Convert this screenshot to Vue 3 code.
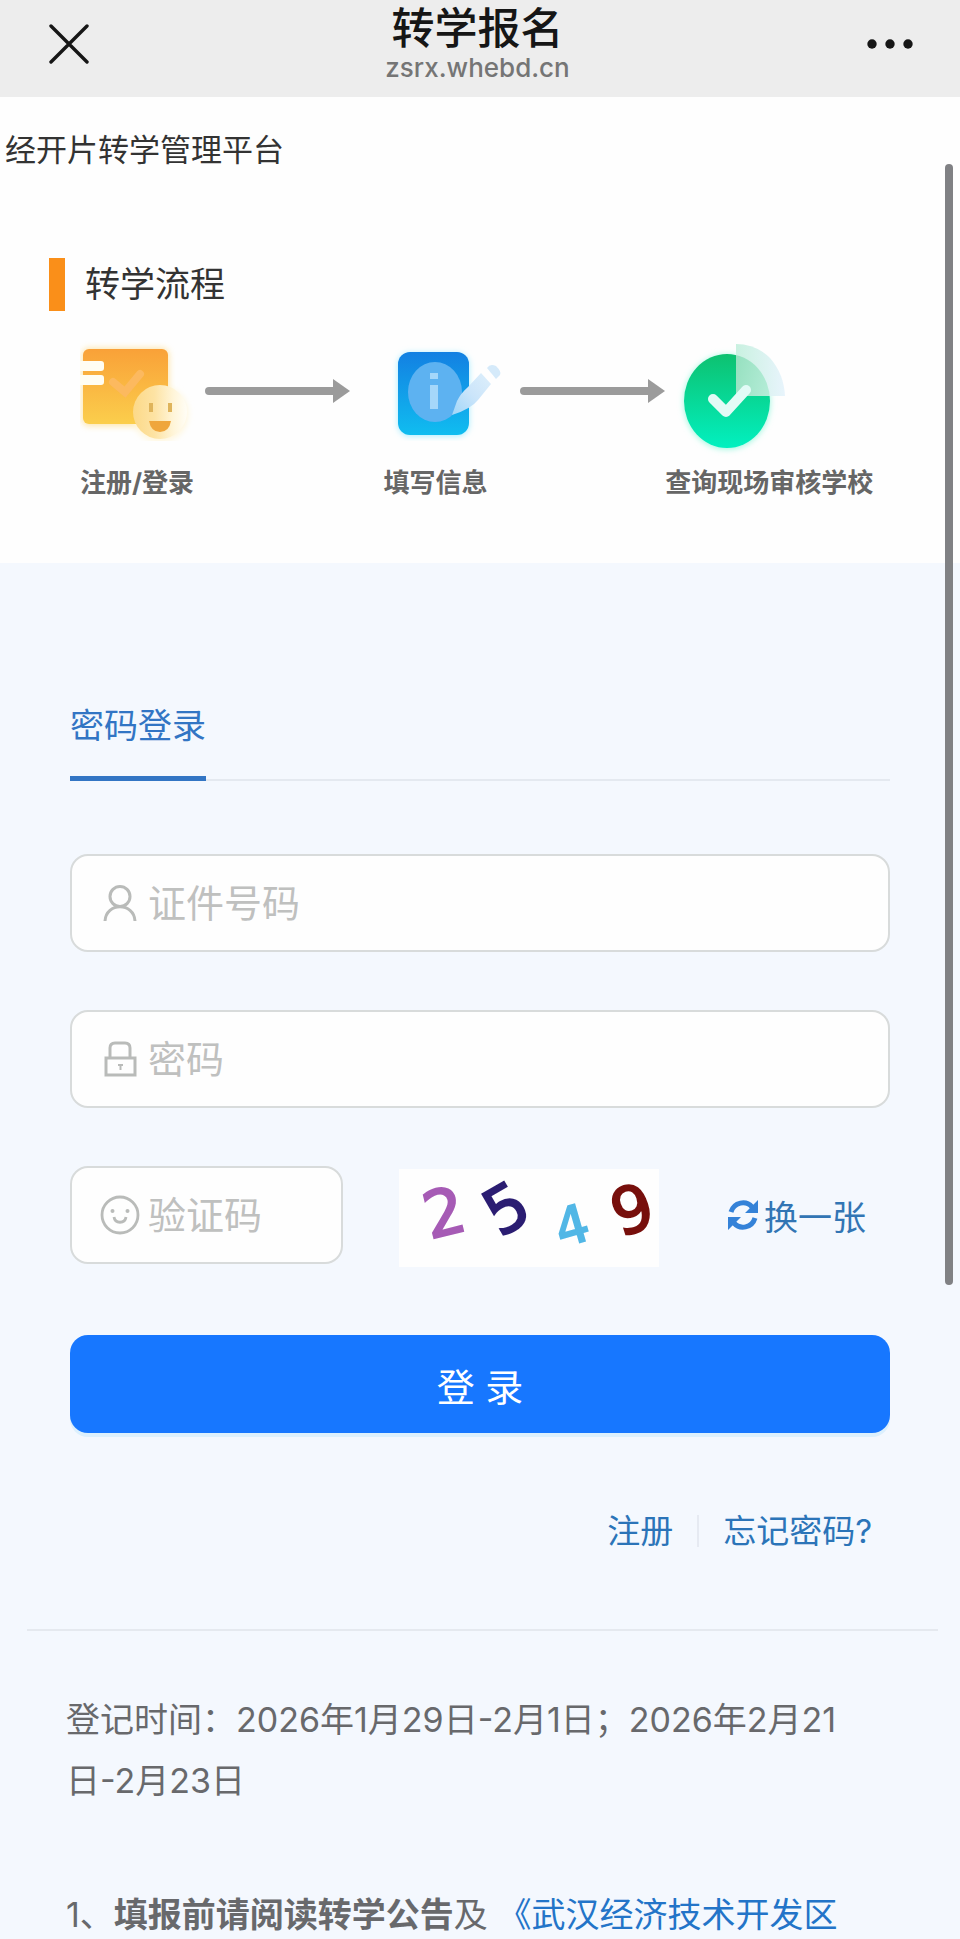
<script setup>
import { ref } from 'vue'

const idNumber = ref('')
const password = ref('')
const code = ref('')
</script>

<template>
  <div class="page">
    <header class="bar">
      <button class="bar-btn" type="button" aria-label="关闭">
        <svg width="40" height="40" viewBox="0 0 40 40">
          <path d="M2 2L38 38M38 2L2 38" fill="none" stroke="#161616" stroke-width="3.4" stroke-linecap="round" />
        </svg>
      </button>
      <div class="bar-title">
        <h1>转学报名</h1>
        <span>zsrx.whebd.cn</span>
      </div>
      <button class="bar-btn" type="button" aria-label="更多">
        <svg width="48" height="12" viewBox="0 0 48 12" fill="#161616">
          <circle cx="6" cy="6" r="4.7" />
          <circle cx="24" cy="6" r="4.7" />
          <circle cx="42" cy="6" r="4.7" />
        </svg>
      </button>
    </header>

    <section class="intro">
      <p class="platform">经开片转学管理平台</p>
      <h2 class="heading">转学流程</h2>
      <div class="steps">
        <div class="step">
          <svg width="124" height="100" viewBox="0 0 124 100">
            <defs>
              <linearGradient id="amber" x1="0" y1="0" x2="0" y2="1">
                <stop offset="0" stop-color="#f9a138" />
                <stop offset="1" stop-color="#fbce4c" />
              </linearGradient>
              <linearGradient id="cream" x1="0" y1="0" x2="1" y2="0">
                <stop offset="0" stop-color="#fcd988" />
                <stop offset="0.4" stop-color="#fde3a4" />
                <stop offset="0.75" stop-color="#fff5d9" />
                <stop offset="1" stop-color="#fffdf6" />
              </linearGradient>
              <filter id="soft" x="-20%" y="-20%" width="140%" height="140%">
                <feGaussianBlur stdDeviation="3" />
              </filter>
            </defs>
            <rect x="2" y="7" width="87" height="78" rx="7" fill="#fdda86" opacity="0.7" filter="url(#soft)" />
            <circle cx="80" cy="73" r="28" fill="#fff6da" filter="url(#soft)" />
            <rect x="3" y="8" width="85" height="75" rx="6" fill="url(#amber)" />
            <path d="M0 20H21a3 3 0 0 1 3 3v4a3 3 0 0 1-3 3H0zM0 34H21a3 3 0 0 1 3 3v4a3 3 0 0 1-3 3H0z" fill="#fffdf3" />
            <path d="M33 41L45 51L60 33" fill="none" stroke="#fcb95f" stroke-width="8" stroke-linecap="round" />
            <circle cx="80" cy="71" r="27" fill="url(#cream)" />
            <path d="M71 62v9M90 62v9" stroke="#dfb45b" stroke-width="4" />
            <path d="M69 80H91Q89 91 80 91Q71 91 69 80Z" fill="#efa63c" />
          </svg>
          <span>注册/登录</span>
        </div>
        <svg class="arrow" width="146" height="100" viewBox="0 0 146 100">
          <path d="M5 50H132" stroke="#9b9b9b" stroke-width="8" stroke-linecap="round" />
          <path d="M129 38L146 50L129 62Z" fill="#9b9b9b" />
        </svg>
        <div class="step">
          <svg width="124" height="100" viewBox="0 0 124 100">
            <defs>
              <linearGradient id="azure" x1="0" y1="0" x2="0" y2="1">
                <stop offset="0" stop-color="#1380e2" />
                <stop offset="1" stop-color="#10bdf0" />
              </linearGradient>
              <linearGradient id="pen" x1="0" y1="1" x2="1" y2="0">
                <stop offset="0" stop-color="#9fd6f9" />
                <stop offset="0.5" stop-color="#cbe5fa" />
                <stop offset="1" stop-color="#deeffb" />
              </linearGradient>
            </defs>
            <rect x="14" y="12" width="71" height="83" rx="12" fill="#a5ecff" filter="url(#soft)" />
            <rect x="14" y="11" width="71" height="83" rx="12" fill="url(#azure)" />
            <ellipse cx="51" cy="51" rx="27" ry="30" fill="#5db2f1" />
            <path d="M46 32h8v6h-8zM46 44h8v24h-8z" fill="#a5d7fa" />
            <path d="M68 74L73 60Q77 52 84 46L97 32L107 43L94 59Q87 68 68 74Z" fill="url(#pen)" />
            <path d="M103 27Q106 22 112 25Q118 31 116 34L112 38Z" fill="#d5eafa" />
          </svg>
          <span>填写信息</span>
        </div>
        <svg class="arrow" width="146" height="100" viewBox="0 0 146 100">
          <path d="M5 50H132" stroke="#9b9b9b" stroke-width="8" stroke-linecap="round" />
          <path d="M129 38L146 50L129 62Z" fill="#9b9b9b" />
        </svg>
        <div class="step">
          <svg width="124" height="100" viewBox="0 0 124 100" overflow="visible">
            <defs>
              <linearGradient id="jade" x1="0" y1="0" x2="0" y2="1">
                <stop offset="0" stop-color="#0dc170" />
                <stop offset="1" stop-color="#02f0c0" />
              </linearGradient>
              <linearGradient id="mist" x1="0" y1="0" x2="1" y2="0">
                <stop offset="0" stop-color="#c9f1e0" />
                <stop offset="1" stop-color="#e8f4fc" />
              </linearGradient>
              <linearGradient id="mint" x1="0" y1="0" x2="1" y2="0.3">
                <stop offset="0" stop-color="#93dfbd" />
                <stop offset="1" stop-color="#b9eedb" />
              </linearGradient>
              <clipPath id="disc"><ellipse cx="62" cy="60" rx="43" ry="47" /></clipPath>
            </defs>
            <ellipse cx="62" cy="61" rx="43" ry="47" fill="#96f7dc" filter="url(#soft)" />
            <ellipse cx="62" cy="60" rx="43" ry="47" fill="url(#jade)" />
            <path d="M71 55V3Q91 3 105 17Q119 33 120 55Z" fill="url(#mist)" />
            <path d="M71 55V3Q91 3 105 17Q119 33 120 55Z" fill="url(#mint)" clip-path="url(#disc)" />
            <path d="M48 58L61 71L81 49" fill="none" stroke="#e2fbf6" stroke-width="10" stroke-linecap="round" stroke-linejoin="round" />
          </svg>
          <span>查询现场审核学校</span>
        </div>
      </div>
    </section>

    <main>
      <form class="login" @submit.prevent>
        <div class="tabs">
          <button class="tab" type="button">密码登录</button>
        </div>

        <label class="field">
          <svg width="40" height="40" viewBox="0 0 40 40" fill="none" stroke="#b9bbb9" stroke-width="3">
            <circle cx="20" cy="13.500" r="10" />
            <path d="M5 38C6 19 34 19 35 38" />
          </svg>
          <input v-model="idNumber" type="text" placeholder="证件号码" aria-label="证件号码" />
        </label>

        <label class="field">
          <svg width="40" height="40" viewBox="0 0 40 40" fill="none" stroke="#b9bbb9" stroke-width="3">
            <path d="M10 19V9Q10 4 15 4H25Q30 4 30 9V19" />
            <rect x="6" y="19" width="29" height="17" />
            <path d="M18 26h5M20.500 26v5" stroke-width="2" />
          </svg>
          <input v-model="password" type="password" placeholder="密码" aria-label="密码" />
        </label>

        <div class="verify">
          <label class="field">
            <svg width="40" height="40" viewBox="0 0 40 40" fill="none" stroke="#b9bbb9" stroke-width="2.800">
              <circle cx="20" cy="20" r="18" />
              <path d="M14 22C15 29 25 29 26 22" />
              <g fill="#b9bbb9" stroke="none">
                <circle cx="12.500" cy="16" r="2" />
                <circle cx="27.500" cy="16" r="2" />
              </g>
            </svg>
            <input v-model="code" type="text" placeholder="验证码" aria-label="验证码" />
          </label>
          <svg class="captcha" width="260" height="98" viewBox="0 0 260 98" role="img" aria-label="验证码图片">
            <text transform="translate(45 43) rotate(-14)" y="23" fill="#a65bb5" stroke="#a65bb5">2</text>
            <text transform="translate(107 39) rotate(-30)" y="23" fill="#2b1d72" stroke="#2b1d72">5</text>
            <text class="small" transform="translate(173 57) rotate(-16)" y="18" fill="#52b7e6" stroke="#52b7e6">4</text>
            <text transform="translate(233 40) rotate(-18)" y="23" fill="#770f0c" stroke="#770f0c">9</text>
          </svg>
          <button class="refresh" type="button">
            <svg width="32" height="32" viewBox="0 0 32 32">
              <g fill="none" stroke="#3482d8" stroke-width="5">
                <path d="M4 13C7 3 19 1 25 8" />
                <path d="M28 19C25 29 13 31 7 24" />
              </g>
              <path d="M31 1V14H18ZM1 31V18H14Z" fill="#3482d8" />
            </svg>
            换一张
          </button>
        </div>

        <button class="submit" type="submit">登 录</button>

        <nav class="links">
          <a href="#register">注册</a>
          <i></i>
          <a href="#forgot">忘记密码?</a>
        </nav>
      </form>

      <article class="notice">
        <p>登记时间：2026年1月29日-2月1日；2026年2月21日-2月23日</p>
        <p>1、<b>填报前请阅读转学公告</b>及 <a href="#notice">《武汉经济技术开发区</a></p>
      </article>
    </main>

    <div class="thumb"></div>
  </div>
</template>

<style>
body {
  margin: 0;
  background: #f4f8fe;
}
</style>

<style scoped>
.page {
  position: relative;
  color: #333;
  font-family: Inter, "Noto Sans CJK SC", sans-serif;
}
h1, h2, p {
  margin: 0;
  font-weight: 400;
}
svg {
  display: block;
  flex: none;
}
button {
  padding: 0;
  border: 0;
  background: none;
  color: inherit;
  font: inherit;
}
a {
  color: #2b74b8;
  text-decoration: none;
}

.bar {
  display: flex;
  align-items: center;
  justify-content: space-between;
  box-sizing: border-box;
  height: 97px;
  padding: 0 46px 10px 49px;
  background: #ededed;
}
.bar-title {
  display: flex;
  flex-direction: column;
  align-items: center;
}
.bar-title h1 {
  color: #161616;
  font-size: 43px;
  font-weight: 500;
  line-height: 48px;
}
.bar-title span {
  color: #757575;
  font-size: 26px;
  font-weight: 500;
  line-height: 32px;
}

.intro {
  padding: 33px 0 63px;
  background: #fefefe;
}
.platform {
  padding-left: 5px;
  font-size: 31px;
  line-height: 40px;
}
.heading {
  display: flex;
  align-items: center;
  gap: 20px;
  margin: 88px 0 30px 49px;
  font-size: 35px;
  line-height: 53px;
}
.heading::before {
  content: "";
  width: 16px;
  height: 53px;
  background: #fa8f19;
}
.steps {
  display: grid;
  grid-template-columns: 124fr 180fr 136fr 145fr 208fr;
  padding: 0 87px 0 80px;
}
.step {
  min-width: 0;
}
.step span {
  display: block;
  margin-top: 25px;
  color: #666;
  font-size: 26px;
  font-weight: 700;
  line-height: 34px;
  white-space: nowrap;
}

.login {
  padding: 130px 70px 74px;
}
.tabs {
  display: flex;
  margin-bottom: 73px;
  border-bottom: 2px solid #e4e9f0;
}
.tab {
  height: 88px;
  margin-bottom: -2px;
  padding-bottom: 23px;
  border-bottom: 5px solid #3275c4;
  color: #3275c4;
  font-size: 34px;
}
.field {
  display: flex;
  align-items: center;
  gap: 8px;
  box-sizing: border-box;
  height: 98px;
  margin-bottom: 58px;
  padding: 0 28px;
  border: 2px solid #d8dbdb;
  border-radius: 18px;
  background: #fefefe;
}
.field input {
  flex: 1;
  min-width: 0;
  padding: 0;
  border: 0;
  outline: 0;
  background: none;
  color: #333;
  font: inherit;
  font-size: 38px;
}
.field input::placeholder {
  color: #bfc0bf;
  opacity: 1;
}
.verify {
  display: flex;
  align-items: center;
  height: 98px;
  margin-bottom: 71px;
}
.verify .field {
  flex: 0 1 273px;
  min-width: 0;
  margin: 0;
}
.captcha {
  margin: 6px 68px 0 56px;
  background: #fefefe;
  font-family: "DejaVu Sans", sans-serif;
  font-size: 64px;
  text-anchor: middle;
  stroke-width: 2;
}
.captcha .small {
  font-size: 52px;
}
.refresh {
  display: flex;
  flex: none;
  align-items: center;
  gap: 5px;
  color: #3275b4;
  font-size: 34px;
  white-space: nowrap;
}
.submit {
  width: 100%;
  height: 98px;
  border-radius: 18px;
  background: #1777ff;
  box-shadow: 0 4px 0 #dcf0fd;
  color: #fff;
  font-size: 38px;
}
.links {
  display: flex;
  align-items: center;
  justify-content: flex-end;
  gap: 24px;
  margin-top: 74px;
  padding-right: 18px;
  font-size: 33px;
  line-height: 48px;
}
.links i {
  width: 2px;
  height: 32px;
  background: #e6eaf2;
}
.notice {
  margin: 0 22px 0 27px;
  padding: 58px 80px 0 39px;
  border-top: 2px solid #e5e9ef;
  color: #68696c;
  font-size: 34px;
  line-height: 61px;
}
.notice p + p {
  margin-top: 73px;
  white-space: nowrap;
}
.notice a {
  color: #2374c8;
}
.thumb {
  position: absolute;
  top: 164px;
  right: 7px;
  width: 8px;
  height: 1121px;
  border-radius: 4px;
  background: #808184;
}
</style>
